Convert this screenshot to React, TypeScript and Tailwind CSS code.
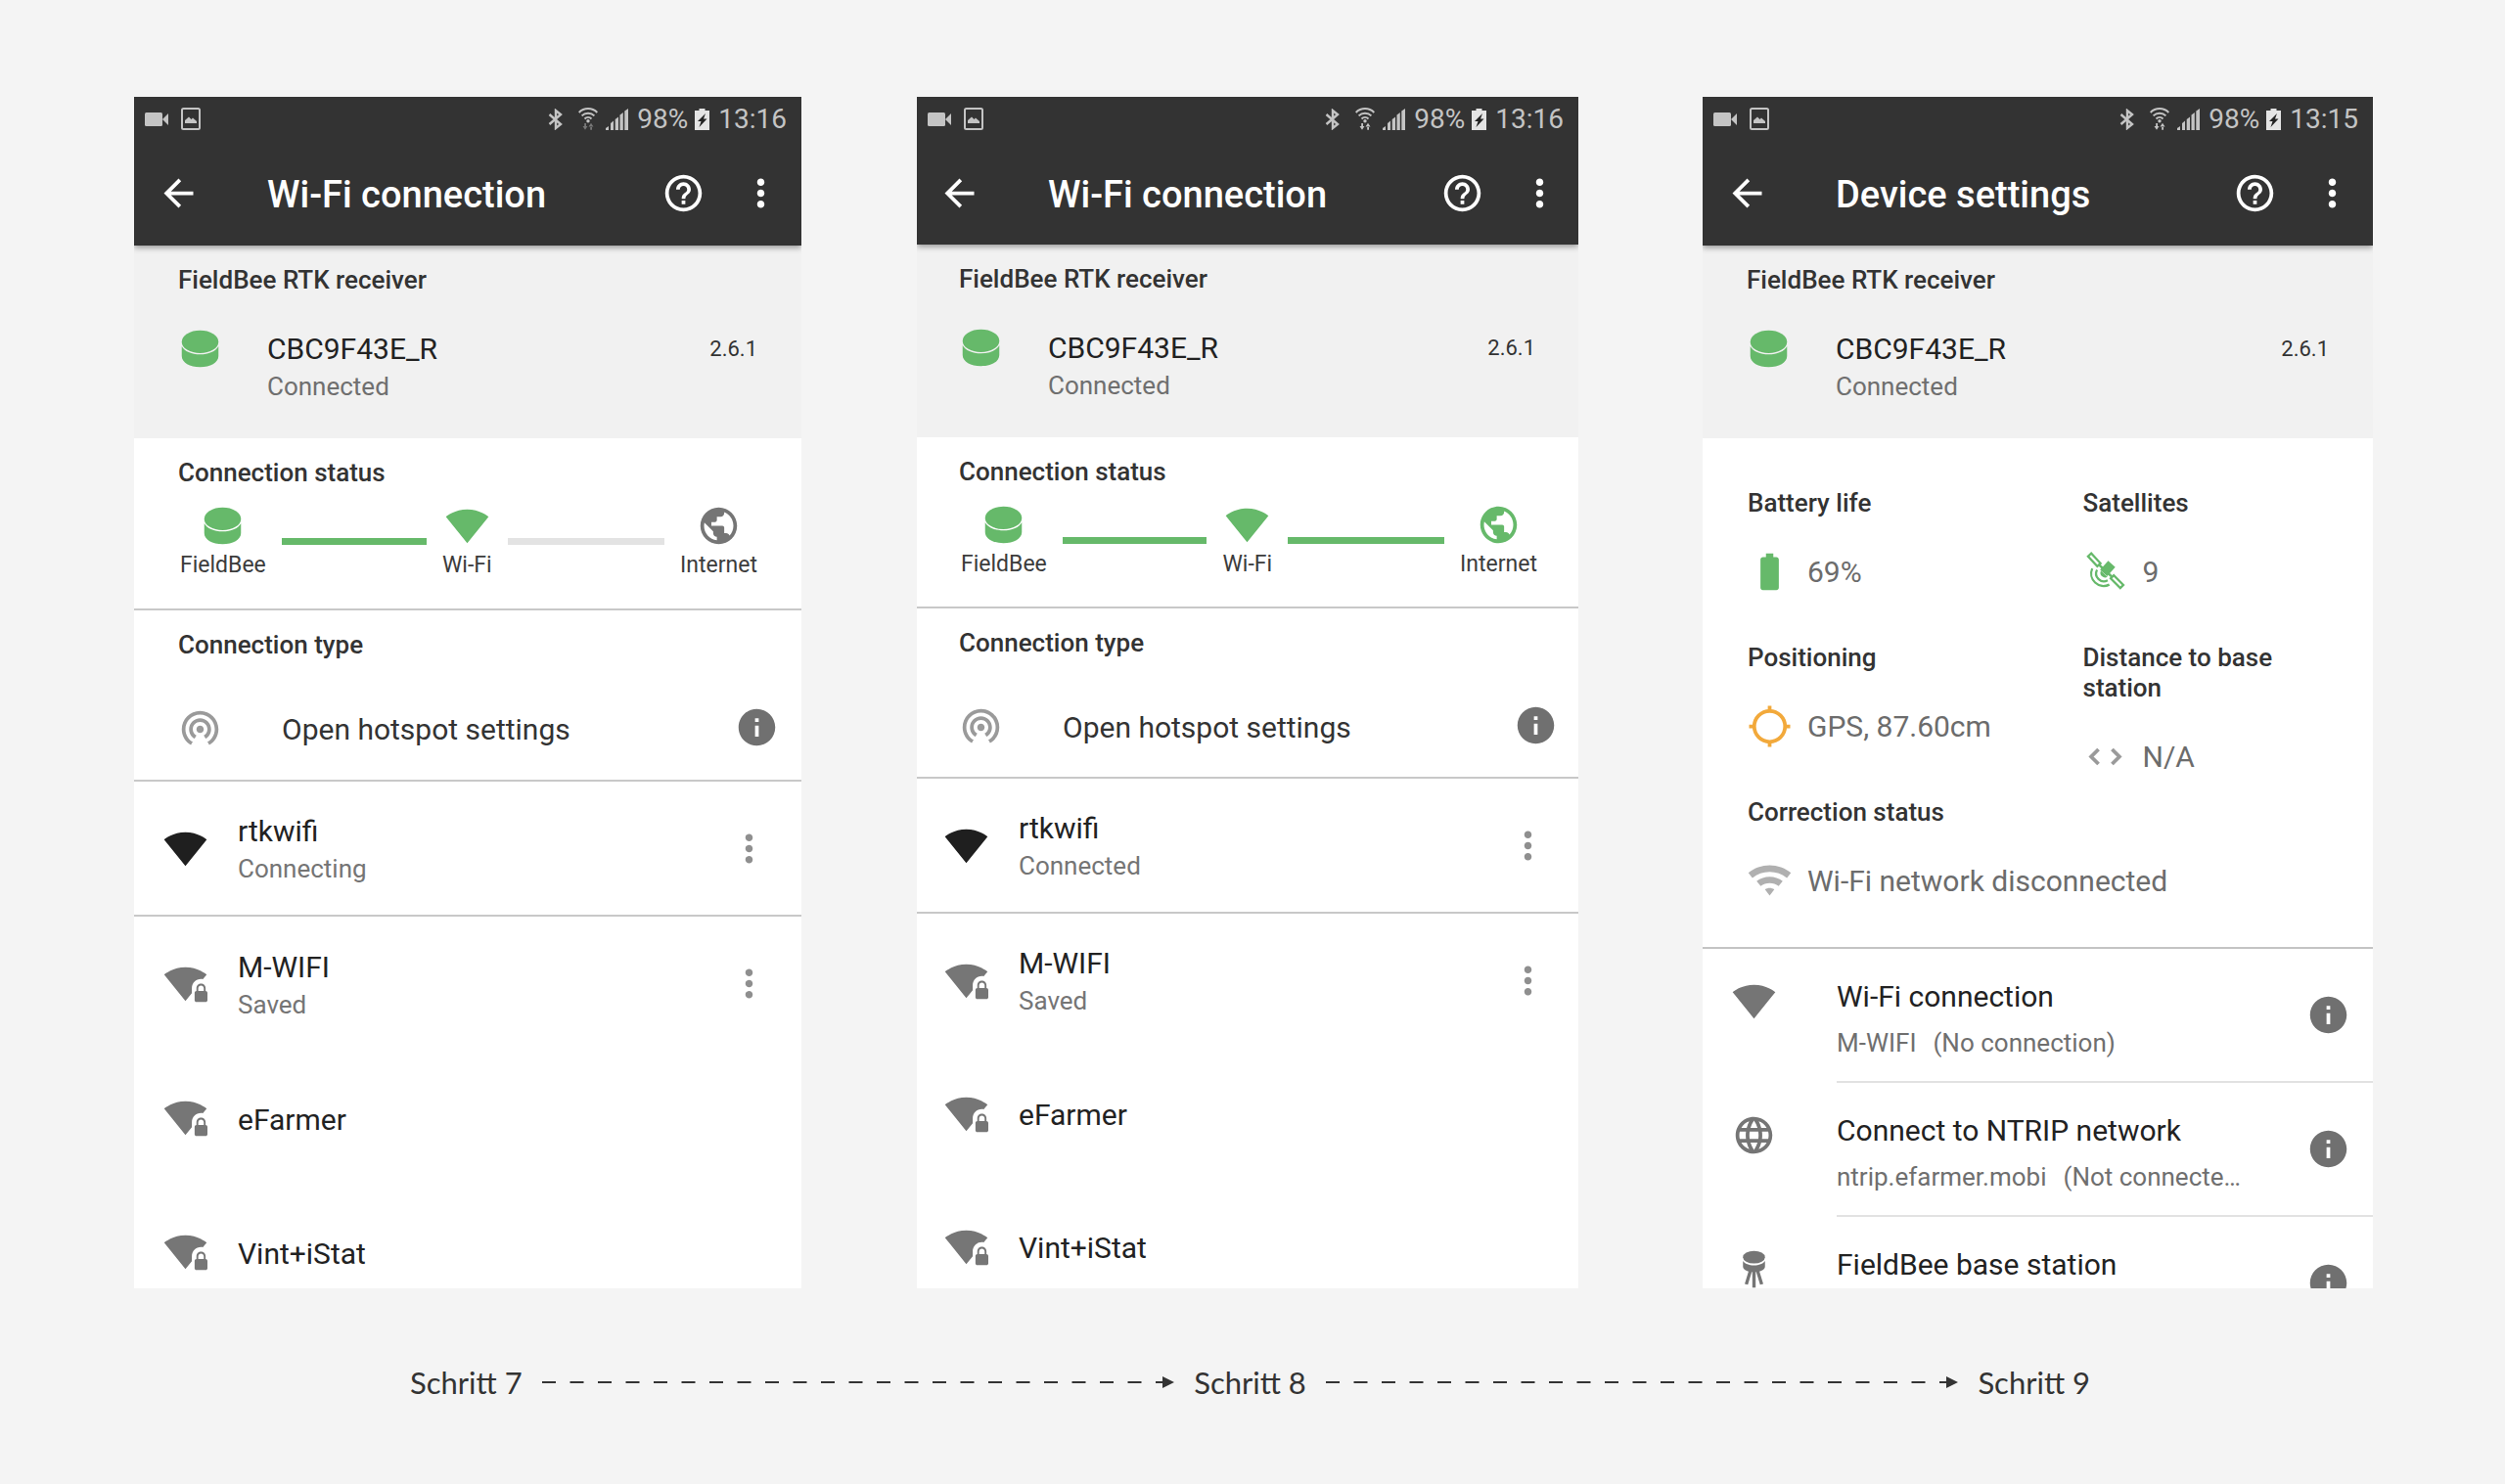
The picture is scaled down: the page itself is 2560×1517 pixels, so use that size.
import type { ReactNode } from "react";

type IconProps = { className?: string };

const ICON = "size-[45px] shrink-0";

function Glyph({ d, className = "" }: { d: string; className?: string }) {
  return (
    <svg viewBox="0 0 24 24" fill="currentColor" aria-hidden="true" className={`${ICON} ${className}`}>
      <path d={d} />
    </svg>
  );
}

const PATHS = {
  back: "M20 11H7.83l5.59-5.59L12 4l-8 8 8 8 1.41-1.41L7.83 13H20v-2z",
  help: "M11 18h2v-2h-2v2zm1-16C6.48 2 2 6.48 2 12s4.48 10 10 10 10-4.48 10-10S17.52 2 12 2zm0 18c-4.41 0-8-3.59-8-8s3.59-8 8-8 8 3.59 8 8-3.59 8-8 8zm0-14c-2.21 0-4 1.79-4 4h2c0-1.1.9-2 2-2s2 .9 2 2c0 2-3 1.75-3 5h2c0-2.25 3-2.5 3-5 0-2.21-1.79-4-4-4z",
  more: "M12 8c1.1 0 2-.9 2-2s-.9-2-2-2-2 .9-2 2 .9 2 2 2zm0 2c-1.1 0-2 .9-2 2s.9 2 2 2 2-.9 2-2-.9-2-2-2zm0 6c-1.1 0-2 .9-2 2s.9 2 2 2 2-.9 2-2-.9-2-2-2z",
  fan: "M12.01 21.49L23.64 7c-.45-.34-4.93-4-11.64-4C5.28 3 .81 6.66.36 7l11.63 14.49.01.01.01-.01z",
  fanLock:
    "M23 16v-1.5c0-1.4-1.1-2.5-2.5-2.5S18 13.1 18 14.5V16c-.5 0-1 .5-1 1v4c0 .5.5 1 1 1h5c.5 0 1-.5 1-1v-4c0-.5-.5-1-1-1zm-1 0h-3v-1.5c0-.8.7-1.5 1.5-1.5s1.5.7 1.5 1.5V16zM15.5 14.5c0-2.8 2.2-5 5-5 .4 0 .7 0 1 .1L23.6 7c-.4-.3-4.9-4-11.6-4C5.3 3 .8 6.7.4 7L12 21.5l3.5-4.3v-2.7z",
  earth:
    "M12 2C6.48 2 2 6.48 2 12s4.48 10 10 10 10-4.48 10-10S17.52 2 12 2zm-1 17.93c-3.95-.49-7-3.85-7-7.93 0-.62.08-1.21.21-1.79L9 15v1c0 1.1.9 2 2 2v1.93zm6.9-2.54c-.26-.81-1-1.39-1.9-1.39h-1v-3c0-.55-.45-1-1-1H8v-2h2c.55 0 1-.45 1-1V7h2c1.1 0 2-.9 2-2v-.41c2.93 1.19 5 4.06 5 7.41 0 2.08-.8 3.97-2.1 5.39z",
  globe:
    "M11.99 2C6.47 2 2 6.48 2 12s4.47 10 9.99 10C17.52 22 22 17.52 22 12S17.52 2 11.99 2zm6.93 6h-2.95c-.32-1.25-.78-2.45-1.38-3.56 1.84.63 3.37 1.91 4.33 3.56zM12 4.04c.83 1.2 1.48 2.53 1.91 3.96h-3.82c.43-1.43 1.08-2.76 1.91-3.96zM4.26 14C4.1 13.36 4 12.69 4 12s.1-1.36.26-2h3.38c-.08.66-.14 1.32-.14 2 0 .68.06 1.34.14 2H4.26zm.82 2h2.95c.32 1.25.78 2.45 1.38 3.56-1.84-.63-3.37-1.9-4.33-3.56zm2.95-8H5.08c.96-1.66 2.49-2.93 4.33-3.56C8.81 5.55 8.35 6.75 8.03 8zM12 19.96c-.83-1.2-1.48-2.53-1.91-3.96h3.82c-.43 1.43-1.08 2.76-1.91 3.96zM14.34 14H9.66c-.09-.66-.16-1.32-.16-2 0-.68.07-1.35.16-2h4.68c.09.65.16 1.32.16 2 0 .68-.07 1.34-.16 2zm.25 5.56c.6-1.11 1.06-2.31 1.38-3.56h2.95c-.96 1.65-2.49 2.93-4.33 3.56zM16.36 14c.08-.66.14-1.32.14-2 0-.68-.06-1.34-.14-2h3.38c.16.64.26 1.31.26 2s-.1 1.36-.26 2h-3.38z",
  tethering:
    "M12 11c-1.1 0-2 .9-2 2s.9 2 2 2 2-.9 2-2-.9-2-2-2zm6 2c0-3.31-2.69-6-6-6s-6 2.69-6 6c0 2.22 1.21 4.15 3 5.19l1-1.74c-1.19-.7-2-1.97-2-3.45 0-2.21 1.79-4 4-4s4 1.79 4 4c0 1.48-.81 2.75-2 3.45l1 1.74c1.79-1.04 3-2.97 3-5.19zM12 3C6.48 3 2 7.48 2 13c0 3.7 2.01 6.92 4.99 8.65l1-1.73C5.61 18.53 4 15.96 4 13c0-4.42 3.58-8 8-8s8 3.58 8 8c0 2.96-1.61 5.53-4 6.92l1 1.73c2.99-1.73 5-4.95 5-8.65 0-5.52-4.48-10-10-10z",
  info: "M12 2C6.48 2 2 6.48 2 12s4.48 10 10 10 10-4.48 10-10S17.52 2 12 2zm1 15h-2v-6h2v6zm0-8h-2V7h2v2z",
  battery: "M15.67 4H14V2h-4v2H8.33C7.6 4 7 4.6 7 5.33v15.33C7 21.4 7.6 22 8.33 22h7.33c.74 0 1.34-.6 1.34-1.33V5.33C17 4.6 16.4 4 15.67 4z",
};

function Receiver({ className = "" }: IconProps) {
  return (
    <svg viewBox="0 0 24 24" fill="currentColor" aria-hidden="true" className={`${ICON} ${className}`}>
      <ellipse cx="12" cy="8.2" rx="10" ry="6.2" />
      <path d="M2 10.6C3.4 13.3 7.4 15.1 12 15.1S20.6 13.3 22 10.6V16C22 19.6 17.5 22 12 22S2 19.6 2 16Z" />
    </svg>
  );
}

function Satellite({ className = "" }: IconProps) {
  return (
    <svg viewBox="0 0 24 24" fill="none" stroke="currentColor" strokeWidth="1.2" aria-hidden="true" className={`${ICON} ${className}`}>
      <rect x="-3.7" y="-1.2" width="7.4" height="2.4" transform="translate(6 5.5) rotate(47)" />
      <rect x="-3.7" y="-1.2" width="7.4" height="2.4" transform="translate(18.4 17.4) rotate(45)" />
      <path d="M8.6 8.2L15.9 15" strokeWidth="1.4" />
      <rect x="-2.6" y="-3.3" width="5.2" height="6.6" fill="currentColor" stroke="none" transform="translate(13.3 10.2) rotate(42)" />
      <path d="M9.6 11.4a2.600 2.600 0 0 0 3.600 3.400z" fill="currentColor" stroke="none" />
      <path d="M7.5 10.9A4.300 4.300 0 0 0 13.300 16.700" />
      <path d="M4.9 10.2A6.800 6.800 0 0 0 14.200 19" />
    </svg>
  );
}

function Crosshair({ className = "" }: IconProps) {
  return (
    <svg viewBox="0 0 24 24" fill="none" stroke="currentColor" aria-hidden="true" className={`${ICON} ${className}`}>
      <circle cx="12" cy="12" r="8.4" strokeWidth="2" />
      <path d="M12 .8v3M12 20.200v3M.800 12h3M20.200 12h3" strokeWidth="2" />
    </svg>
  );
}

function Chevrons({ className = "" }: IconProps) {
  return (
    <svg viewBox="0 0 24 24" fill="none" stroke="currentColor" strokeWidth="2" aria-hidden="true" className={`${ICON} ${className}`}>
      <path d="M8.3 8l-4 4 4 4M15.700 8l4 4-4 4" />
    </svg>
  );
}

function WifiArcs({ className = "" }: IconProps) {
  return (
    <svg viewBox="0 0 24 24" fill="currentColor" aria-hidden="true" className={`${ICON} ${className}`}>
      <path d="M12 20L14.550 16.600C13.800 16.100 12.900 15.800 12 15.800S10.200 16.100 9.450 16.600L12 20ZM12 3.500C7.800 3.500 3.600 5 .4 7.600L2.600 10.400C5.300 8.300 8.500 7.100 12 7.100S18.700 8.300 21.400 10.400L23.600 7.600C20.400 5 16.200 3.500 12 3.500ZM12 9.700C9.400 9.700 6.900 10.600 4.900 12.100L7.100 14.800C8.500 13.800 10.200 13.200 12 13.200S15.500 13.800 16.900 14.800L19.100 12.100C17.100 10.600 14.600 9.700 12 9.700Z" />
    </svg>
  );
}

function BaseStation({ className = "" }: IconProps) {
  return (
    <svg viewBox="0 0 24 24" fill="currentColor" aria-hidden="true" className={`${ICON} ${className}`}>
      <ellipse cx="12" cy="5.4" rx="6" ry="3.4" />
      <path d="M6 7.500C7 9 9.300 9.900 12 9.900S17 9 18 7.500V10.500C18 12.300 15.400 13.500 12 13.500S6 12.300 6 10.500Z" />
      <path d="M10 13l-2.200 7.200M14 13l2.200 7.200M12 13v9" stroke="currentColor" strokeWidth="1.800" fill="none" />
    </svg>
  );
}

function StatusBar({ time, idle }: { time: string; idle: boolean }) {
  return (
    <div className="flex h-[45px] items-center pl-[11px] pr-[15px] text-[28px] leading-[45px] text-[#c4c4c4]">
      <svg viewBox="0 0 25 14" fill="currentColor" aria-hidden="true" className="mr-3 h-[14px] w-[25px]">
        <rect width="18" height="14" rx="1.5" />
        <path d="M18 7l6-6v12z" />
      </svg>
      <svg viewBox="0 0 20 23" fill="none" aria-hidden="true" className="h-[23px] w-5">
        <rect x="1" y="1" width="18" height="21" rx="1.5" stroke="currentColor" strokeWidth="2" />
        <path d="M4 16v-3l4-3.500 2.500 2.500 1.500-1.500 4 3.500v2z" fill="currentColor" />
      </svg>
      <div className="ml-auto flex items-center">
        <svg viewBox="0 0 16 22" fill="none" stroke="currentColor" strokeWidth="2.4" aria-hidden="true" className="mr-[15px] h-[22px] w-4">
          <path d="M1.500 6L13 16l-5 4V2l5 4L1.500 16" />
        </svg>
        <svg viewBox="0 0 20 23" fill="none" stroke="currentColor" aria-hidden="true" className="mr-2 h-[23px] w-5">
          <path d="M.700 5a13 13 0 0 1 18.600 0M3.600 8.400a9 9 0 0 1 12.800 0M6.500 11.500a5 5 0 0 1 7 0" strokeWidth="2" />
          <circle cx="10" cy="13.8" r="1.7" fill="currentColor" stroke="none" />
          <path d="M4.500 19h5L7 22.800zM6.200 16h1.800v4H6.200zM10.500 19.500h5L13 15.800zM12.200 19H14v3.800h-1.800z" fill={idle ? "#777777" : "currentColor"} stroke="none" />
        </svg>
        <svg viewBox="0 0 23 22" fill="currentColor" aria-hidden="true" className="mr-[9px] h-[22px] w-[23px]">
          <path d="M0 22v-2l3-2v4zM5 22v-7l3-2.500V22zM9.700 22V11l3.300-2.500V22zM14.500 22V6.500l3.300-2.500v18zM19.300 22V2.500L23 0v22z" />
        </svg>
        <span className="mr-[7px]">98%</span>
        <svg viewBox="0 0 15 22" aria-hidden="true" className="mr-[9px] h-[22px] w-[15px]">
          <path d="M4.500 0h6v2H15V22H0V2h4.500z" fill="#e4e4e4" />
          <path d="M11 5L3 13h3.500L4.500 19l8-8.500H9z" fill="#222222" />
        </svg>
        <span>{time}</span>
      </div>
    </div>
  );
}

function Heading({ children }: { children: ReactNode }) {
  return <h2 className="text-[26px] font-medium leading-[31px] text-[#333333]">{children}</h2>;
}

function Phone({ title, time, idle = false, compact = false, className = "", children }: {
  title: string;
  time: string;
  idle?: boolean;
  compact?: boolean;
  className?: string;
  children: ReactNode;
}) {
  return (
    <section className={`h-[1218px] overflow-hidden bg-white ${className}`}>
      <header className="relative bg-[#333333] shadow-[0_2px_6px_rgba(0,0,0,0.4)]">
        <StatusBar time={time} idle={idle} />
        <div className={`flex items-center text-white ${compact ? "h-[106px] pl-[21px] pr-[17px]" : "h-[107px] pl-[23px] pr-[19px]"}`}>
          <button type="button" aria-label="Back" className="w-[113px] shrink-0">
            <Glyph d={PATHS.back} />
          </button>
          <h1 className="grow pt-1 text-[38px] font-medium leading-[45px]">{title}</h1>
          <button type="button" aria-label="Help" className="mr-[34px]">
            <Glyph d={PATHS.help} />
          </button>
          <button type="button" aria-label="More options">
            <Glyph d={PATHS.more} />
          </button>
        </div>
      </header>
      <div className={`bg-[#f1f1f1] pb-[33px] pt-5 ${compact ? "pl-[43px] pr-[44px]" : "px-[45px]"}`}>
        <Heading>FieldBee RTK receiver</Heading>
        <div className="mt-9 flex items-start">
          <Receiver className="-mt-1 mr-[46px] text-[#66b96a]" />
          <div className="grow pb-px leading-[38px]">
            <p className="text-[30px] text-[#222222]">CBC9F43E_R</p>
            <p className="text-[26px] text-[#6f6f6f]">Connected</p>
          </div>
          <span className="text-[22px] leading-[38px] text-[#333333]">2.6.1</span>
        </div>
      </div>
      {children}
    </section>
  );
}

function StatusNode({ label, children }: { label: string; children: ReactNode }) {
  return (
    <div className="flex flex-col items-center text-[23px] leading-[35px] text-[#3c3c3c]">
      {children}
      <span>{label}</span>
    </div>
  );
}

function Network({ name, state, active = false, menu = false, compact }: {
  name: string;
  state?: string;
  active?: boolean;
  menu?: boolean;
  compact: boolean;
}) {
  return (
    <li
      className={`flex items-center leading-[38px] ${compact ? "pl-7 pr-[29px]" : "pl-[30px] pr-[31px]"} ${active || compact ? "h-[136px]" : "h-[137px]"}`}
    >
      <Glyph d={active ? PATHS.fan : PATHS.fanLock} className={active ? "mr-[31px] text-[#1f1f1f]" : "mr-[31px] text-[#767676]"} />
      <div className="grow pt-1">
        <p className="text-[30px] text-[#222222]">{name}</p>
        {state && <p className="text-[26px] text-[#757575]">{state}</p>}
      </div>
      {menu && (
        <button type="button" aria-label={`Options for ${name}`} className="text-[#8f8f8f]">
          <Glyph d={PATHS.more} />
        </button>
      )}
    </li>
  );
}

function WifiScreen({ online, className }: { online: boolean; className: string }) {
  const compact = online;
  return (
    <Phone title="Wi-Fi connection" time="13:16" idle={!online} compact={compact} className={className}>
      <div className={`border-b-2 border-[#c8c8c8] pt-5 ${compact ? "pb-[26px] pl-[43px] pr-[42px]" : "pb-[27px] pl-[45px] pr-[45px]"}`}>
        <Heading>Connection status</Heading>
        <div className="mt-4 flex gap-4 pl-[2px]">
          <StatusNode label="FieldBee">
            <Receiver className="text-[#66b96a]" />
          </StatusNode>
          <div className="mt-[35px] h-[7px] grow-[12] basis-0 bg-[#66b96a]" />
          <StatusNode label="Wi-Fi">
            <Glyph d={PATHS.fan} className="text-[#66b96a]" />
          </StatusNode>
          <div className={`mt-[35px] h-[7px] grow-[13] basis-0 ${online ? "bg-[#66b96a]" : "bg-[#e3e3e3]"}`} />
          <StatusNode label="Internet">
            <Glyph d={PATHS.earth} className={online ? "text-[#66b96a]" : "text-[#757575]"} />
          </StatusNode>
        </div>
      </div>
      <div className={`border-b-2 border-[#c8c8c8] pt-5 ${compact ? "pb-7 pl-[43px] pr-[21px]" : "pb-[29px] pl-[45px] pr-[23px]"}`}>
        <Heading>Connection type</Heading>
        <div className="mt-11 flex items-center">
          <Glyph d={PATHS.tethering} className="mr-[61px] text-[#9a9a9a]" />
          <span className="grow pt-1 text-[30px] leading-[45px] text-[#333333]">Open hotspot settings</span>
          <button type="button" aria-label="About hotspot settings" className="text-[#707070]">
            <Glyph d={PATHS.info} />
          </button>
        </div>
      </div>
      <ul className="border-b-2 border-[#c8c8c8]">
        <Network name="rtkwifi" state={online ? "Connected" : "Connecting"} active menu compact={compact} />
      </ul>
      <ul>
        <Network name="M-WIFI" state="Saved" menu compact={compact} />
        <Network name="eFarmer" compact={compact} />
        <Network name="Vint+iStat" compact={compact} />
      </ul>
    </Phone>
  );
}

function Metric({ label, value, children }: { label: string; value: string; children: ReactNode }) {
  return (
    <div className="px-[46px]">
      <Heading>{label}</Heading>
      <div className="mt-8 flex items-center gap-4 text-[30px] leading-[45px] text-[#6c6c6c]">
        {children}
        <span>{value}</span>
      </div>
    </div>
  );
}

function SettingRow({ title, detail, note, children }: { title: string; detail?: string; note?: string; children: ReactNode }) {
  return (
    <li className="flex pl-[30px]">
      <div className="w-[107px] shrink-0 pt-[31px] text-[#757575]">{children}</div>
      <div className="flex h-[137px] min-w-0 grow border-b-2 border-[#e2e2e2] pr-[23px]">
        <div className="min-w-0 grow pr-[66px] pt-[30px] leading-[38px]">
          <p className="text-[30px] text-[#222222]">{title}</p>
          <p className="mt-[9px] flex gap-[17px] text-[26px] text-[#6f6f6f]">
            <span>{detail}</span>
            <span className="min-w-0 truncate">{note}</span>
          </p>
        </div>
        <button type="button" aria-label={`About ${title}`} className="text-[#707070]">
          <Glyph d={PATHS.info} />
        </button>
      </div>
    </li>
  );
}

function DeviceScreen({ className }: { className: string }) {
  return (
    <Phone title="Device settings" time="13:15" className={className}>
      <div className="border-b-2 border-[#c4c4c4] pb-[45px] pt-[51px]">
        <div className="grid auto-rows-[158px] grid-cols-2">
          <Metric label="Battery life" value="69%">
            <Glyph d={PATHS.battery} className="text-[#66b96a]" />
          </Metric>
          <Metric label="Satellites" value="9">
            <Satellite className="text-[#66b96a]" />
          </Metric>
          <Metric label="Positioning" value="GPS, 87.60cm">
            <Crosshair className="text-[#f2a93b]" />
          </Metric>
          <Metric label="Distance to base station" value="N/A">
            <Chevrons className="text-[#9a9a9a]" />
          </Metric>
        </div>
        <Metric label="Correction status" value="Wi-Fi network disconnected">
          <WifiArcs className="text-[#b0b0b0]" />
        </Metric>
      </div>
      <ul>
        <SettingRow title="Wi-Fi connection" detail="M-WIFI" note="(No connection)">
          <Glyph d={PATHS.fan} />
        </SettingRow>
        <SettingRow title="Connect to NTRIP network" detail="ntrip.efarmer.mobi" note="(Not connected)">
          <Glyph d={PATHS.globe} />
        </SettingRow>
        <SettingRow title="FieldBee base station">
          <BaseStation />
        </SettingRow>
      </ul>
    </Phone>
  );
}

function StepArrow() {
  return (
    <div className="flex grow items-center text-[#333333]">
      <svg aria-hidden="true" className="h-3 min-w-0 grow basis-0">
        <line x1="0" y1="6" x2="100%" y2="6" stroke="currentColor" strokeWidth="2" strokeDasharray="14 14.5" />
      </svg>
      <svg viewBox="0 0 12 12" fill="currentColor" aria-hidden="true" className="size-3">
        <path d="M0 0L12 6 0 12z" />
      </svg>
    </div>
  );
}

export default function App() {
  return (
    <main className="min-h-screen bg-[#f4f4f4] pt-[99px] font-['Roboto',sans-serif]">
      <div className="grid grid-cols-[682fr_118fr_676fr_127fr_685fr] pl-[137px] pr-[135px]">
        <WifiScreen online={false} className="col-start-1" />
        <WifiScreen online className="col-start-3" />
        <DeviceScreen className="col-start-5" />
      </div>
      <div className="mt-[76px] flex items-center gap-5 pl-[419px] pr-[424px] font-['Lato',sans-serif] text-[31px] leading-[40px] text-[#333333]">
        <span>Schritt 7</span>
        <StepArrow />
        <span>Schritt 8</span>
        <StepArrow />
        <span>Schritt 9</span>
      </div>
    </main>
  );
}
